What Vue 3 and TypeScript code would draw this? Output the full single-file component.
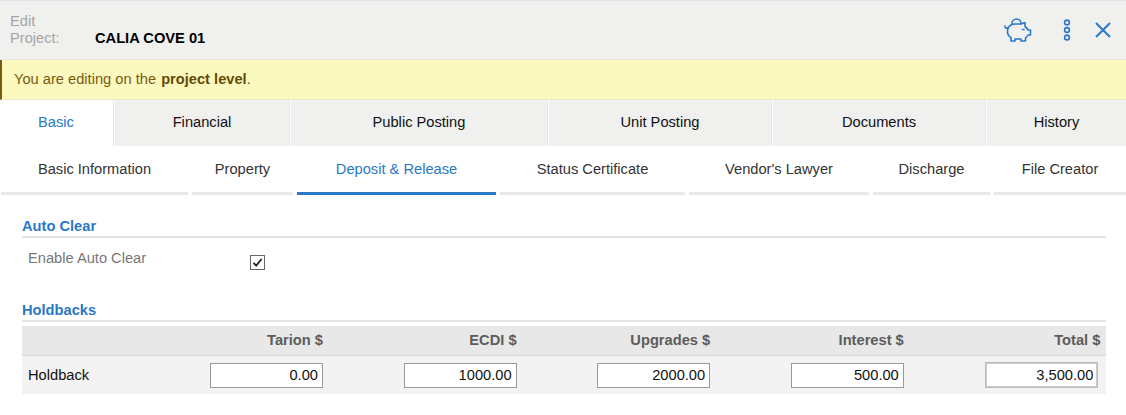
<script setup lang="ts">
const mainTabs = [
  { label: 'Basic', width: 114, active: true },
  { label: 'Financial', width: 175 },
  { label: 'Public Posting', width: 257 },
  { label: 'Unit Posting', width: 223 },
  { label: 'Documents', width: 213 },
  { label: 'History', width: 139 },
]
const subTabs = [
  { label: 'Basic Information', width: 187 },
  { label: 'Property', width: 101 },
  { label: 'Deposit & Release', width: 199, active: true },
  { label: 'Status Certificate', width: 185 },
  { label: "Vendor's Lawyer", width: 180 },
  { label: 'Discharge', width: 117 },
  { label: 'File Creator', width: 132 },
]
const columns = [
  { head: 'Tarion $', value: '0.00' },
  { head: 'ECDI $', value: '1000.00' },
  { head: 'Upgrades $', value: '2000.00' },
  { head: 'Interest $', value: '500.00' },
  { head: 'Total $', value: '3,500.00', total: true },
]
</script>

<template>
  <div class="page">
    <header class="header">
      <div class="edit-label">Edit Project:</div>
      <div class="project-name">CALIA COVE 01</div>
      <div class="actions">
        <svg class="piggy" width="28" height="24" viewBox="0 0 28 24" fill="none" stroke="#2a78c8" stroke-width="1.6" stroke-linejoin="round" stroke-linecap="round">
          <path d="M8 6C8 3 10 1 12.5 1C15 1 17 3 17 6" />
          <path d="M4 10C2 10.5 0.8 9.5 1 8" />
          <path d="M4 10C5.5 7.5 8 6 11 6H17L21 4.5V8.5C22.5 9.5 23.5 10.5 24 12H26.5V17H24C23.5 18 22.5 19 21.5 20V23H17V21H11V23H7V19.5C4 18 3 14 4 10Z" />
          <path d="M18.5 11.5H20" />
        </svg>
        <svg class="dots" width="10" height="24" viewBox="0 0 10 24" fill="none" stroke="#2a78c8" stroke-width="1.6">
          <circle cx="5" cy="4.5" r="2.4" />
          <circle cx="5" cy="12" r="2.4" />
          <circle cx="5" cy="19.5" r="2.4" />
        </svg>
        <svg class="close" width="16" height="16" viewBox="0 0 16 16" fill="none" stroke="#2a78c8" stroke-width="2">
          <path d="M1 1L15 15M15 1L1 15" />
        </svg>
      </div>
    </header>

    <div class="notice">You are editing on the&nbsp;<strong>project level</strong>.</div>

    <nav class="main-tabs">
      <div
        v-for="tab in mainTabs"
        :key="tab.label"
        class="main-tab"
        :class="{ active: tab.active }"
        :style="{ width: tab.width + 'px' }"
      >{{ tab.label }}</div>
    </nav>

    <nav class="sub-tabs">
      <div
        v-for="tab in subTabs"
        :key="tab.label"
        class="sub-tab"
        :class="{ active: tab.active }"
        :style="{ width: tab.width + 'px' }"
      >{{ tab.label }}</div>
    </nav>

    <section class="section auto-clear">
      <h2 class="section-title">Auto Clear</h2>
      <div class="field-row">
        <span class="field-label">Enable Auto Clear</span>
        <span class="checkbox">
          <svg width="11" height="11" viewBox="0 0 11 11" fill="none" stroke="#222" stroke-width="1.8">
            <path d="M1.5 5.8L4.2 8.6L9.6 2" />
          </svg>
        </span>
      </div>
    </section>

    <section class="section holdbacks">
      <h2 class="section-title">Holdbacks</h2>
      <div class="table">
        <div class="table-head">
          <div></div>
          <div v-for="col in columns" :key="col.head" class="head-cell" :class="{ total: col.total }">{{ col.head }}</div>
        </div>
        <div class="table-row">
          <div class="row-label">Holdback</div>
          <div v-for="col in columns" :key="col.head" class="input-cell">
            <input class="amount" :class="{ total: col.total }" :value="col.value" readonly />
          </div>
        </div>
      </div>
    </section>
  </div>
</template>

<style>
html, body { margin: 0; background: #fff; }
</style>

<style scoped>
.page {
  width: 1126px;
  height: 415px;
  overflow: hidden;
  font-family: "Liberation Sans", Arial, sans-serif;
  font-size: 14.67px;
  color: #111;
  background: #fff;
}
.header {
  box-sizing: border-box;
  height: 60px;
  display: flex;
  align-items: flex-start;
  background: #f0f0ef;
  border-top: 1px solid #e4e4e4;
  border-bottom: 1px solid #e6e6e2;
}
.edit-label {
  width: 60px;
  margin: 12px 0 0 10px;
  color: #a6a6a6;
  line-height: 17px;
}
.project-name {
  margin: 29px 0 0 25px;
  font-weight: 700;
  line-height: 17px;
  color: #000;
}
.actions {
  margin-left: auto;
  display: flex;
  align-items: center;
  height: 58px;
}
.piggy { margin-right: 30px; }
.dots { margin-right: 23px; }
.close { margin-right: 15px; }
.notice {
  box-sizing: border-box;
  height: 40px;
  display: flex;
  align-items: center;
  padding-left: 12px;
  padding-bottom: 1px;
  background: #fbf9be;
  border-left: 2px solid #7a5a10;
  border-bottom: 1px solid #e8e8d0;
  color: #7a5a10;
  white-space: pre;
}
.notice strong { color: #654a08; margin-left: 1px; }
.main-tabs {
  display: flex;
  height: 47px;
}
.main-tab {
  box-sizing: border-box;
  flex: none;
  margin-right: 1px;
  height: 46px;
  display: flex;
  align-items: center;
  justify-content: center;
  padding-bottom: 2px;
  background: #f0f0ef;
  border-right: 1px solid #e8e8e6;
}
.main-tab:last-child { margin-right: 0; border-right: 0; }
.main-tab.active {
  height: 47px;
  background: #fff;
  color: #2a78c8;
  padding-bottom: 3px;
  padding-right: 1px;
}
.sub-tabs {
  display: flex;
  gap: 4px;
  padding-left: 1px;
  height: 48px;
}
.sub-tab {
  box-sizing: border-box;
  flex: none;
  height: 48px;
  display: flex;
  align-items: center;
  justify-content: center;
  padding-bottom: 2px;
  color: #333;
  border-bottom: 3px solid #e9e8e6;
}
.sub-tab.active {
  color: #2a78c8;
  border-bottom-color: #2a78c8;
}
.section { margin: 0 20px 0 22px; }
.auto-clear { box-sizing: border-box; padding-top: 23px; height: 107px; }
.section-title {
  margin: 0;
  height: 18px;
  line-height: 17px;
  font-size: 14.67px;
  font-weight: 700;
  color: #2a78c8;
  border-bottom: 2px solid #e2e2e2;
}
.field-row {
  display: flex;
  align-items: flex-start;
  padding: 12px 0 0 6px;
}
.field-label {
  width: 222px;
  line-height: 17px;
  color: #777;
}
.checkbox {
  box-sizing: border-box;
  width: 15px;
  height: 15px;
  margin-top: 5px;
  display: flex;
  align-items: center;
  justify-content: center;
  background: #fff;
  border: 1px solid #666;
}
.table { margin-top: 4px; }
.table-head, .table-row {
  display: grid;
  grid-template-columns: 107.4px repeat(5, 193.6px);
  padding-right: 8px;
}
.table-head {
  box-sizing: border-box;
  height: 30px;
  padding-bottom: 2px;
  align-items: center;
  background: #e8e8e8;
  border-bottom: 1px solid #d8d8d8;
}
.head-cell {
  text-align: right;
  font-weight: 700;
  color: #5c5c5c;
}
.head-cell.total { margin-right: -3px; }
.table-row {
  box-sizing: border-box;
  height: 38px;
  align-items: center;
  background: #f3f3f3;
}
.row-label { padding-left: 6px; white-space: nowrap; }
.input-cell { display: flex; justify-content: flex-end; }
.amount {
  box-sizing: border-box;
  width: 113px;
  height: 25px;
  padding: 0 4px;
  text-align: right;
  font-family: inherit;
  font-size: 14.67px;
  color: #111;
  background: #fff;
  border: 1px solid #999;
  border-radius: 0;
  outline: none;
}
.amount.total {
  margin-right: -1px;
  border: 1px solid #bbb;
  box-shadow: 0 0 0 1px #ccc inset;
  height: 26px;
}
</style>
